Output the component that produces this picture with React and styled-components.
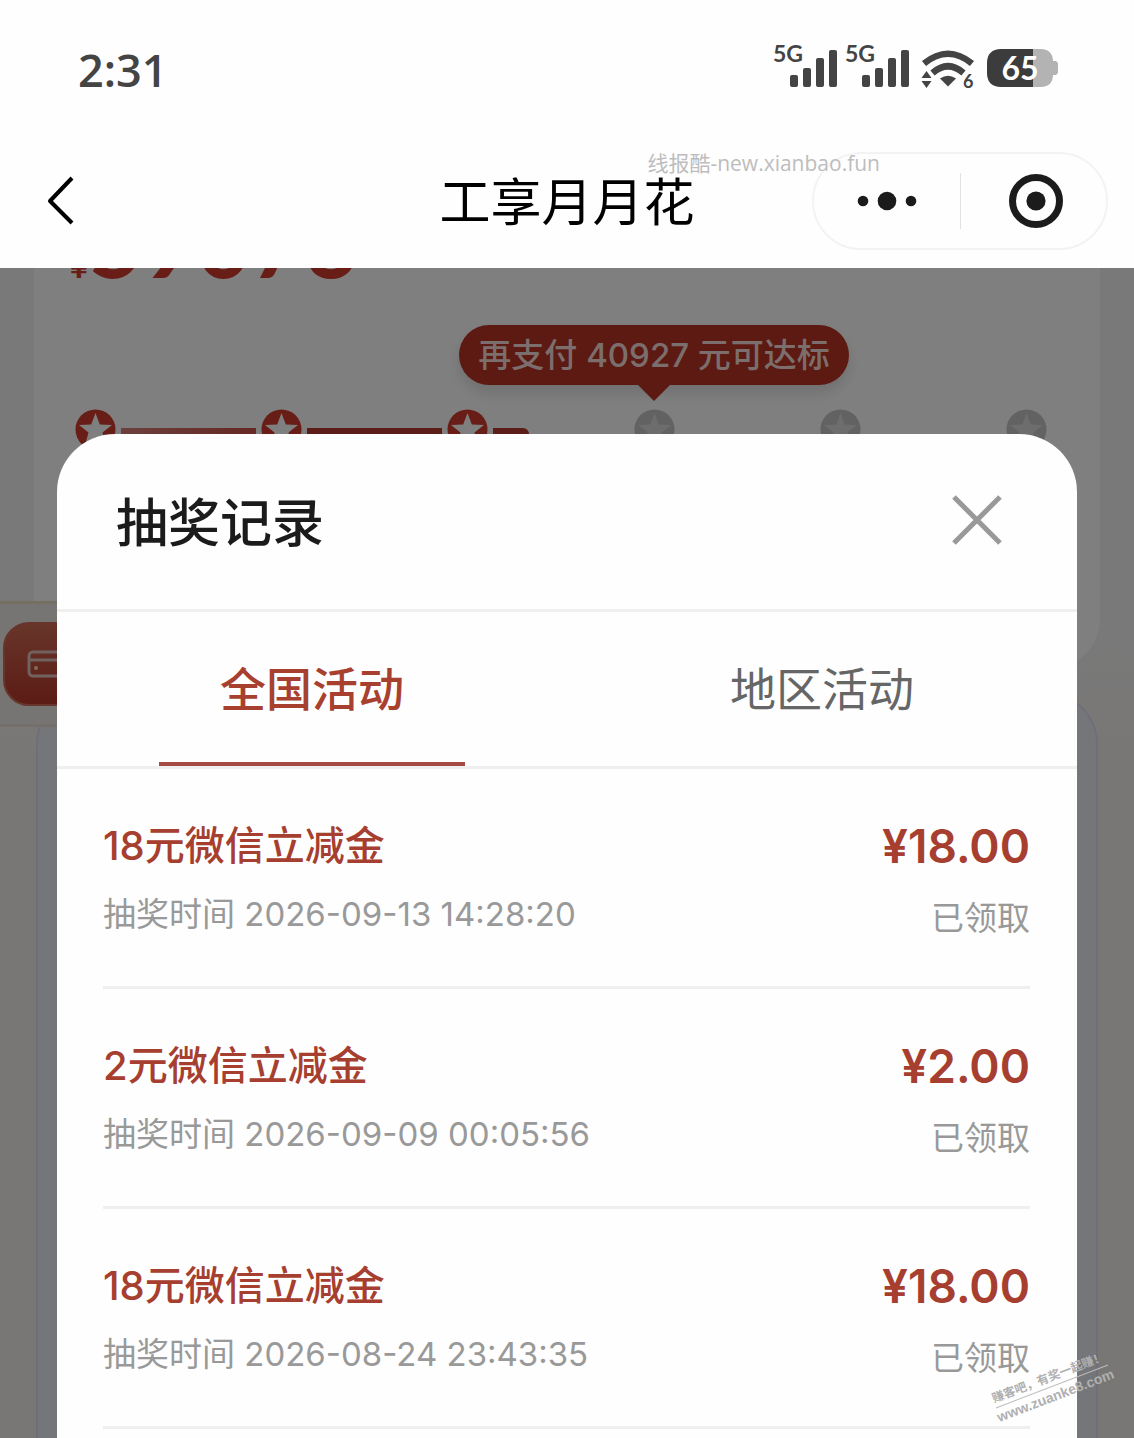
import React, { useState } from "react";
import styled, { createGlobalStyle } from "styled-components";

const records = [
  { id: 1, name: "18元微信立减金", time: "2026-09-13 14:28:20", amount: "18.00" },
  { id: 2, name: "2元微信立减金", time: "2026-09-09 00:05:56", amount: "2.00" },
  { id: 3, name: "18元微信立减金", time: "2026-08-24 23:43:35", amount: "18.00" },
];

const tabs = ["全国活动", "地区活动"];

// fill: how much of the bar after the star is done, in percent
const steps = [
  { id: 1, done: true, fill: 100 },
  { id: 2, done: true, fill: 100 },
  { id: 3, done: true, fill: 26 },
  { id: 4, done: false, fill: 0, tip: "再支付 40927 元可达标" },
  { id: 5, done: false, fill: 0 },
  { id: 6, done: false, fill: 0 },
];

const Signal = () => (
  <svg width="64" height="56" viewBox="0 -8 64 56" fill="#444">
    <text x="0" y="18" fontSize="23" fontWeight="700">
      5G
    </text>
    <rect x="17" y="31" width="8" height="12" rx="2" />
    <rect x="30" y="24" width="8" height="19" rx="2" />
    <rect x="43" y="14" width="8" height="29" rx="2" />
    <rect x="56" y="6" width="8" height="37" rx="2" />
  </svg>
);

const Wifi = () => (
  <svg width="54" height="56" viewBox="0 -8 54 56" fill="#444">
    <g fill="none" stroke="#444" strokeWidth="6.500">
      <path d="M3 19.500Q27 0 51 19.500" />
      <path d="M11.500 29Q27 15.500 42.500 29" />
    </g>
    <path d="M19 34.500Q27 29 35 34.500L27 42.500Z" />
    <path d="M0.500 34L5.500 27L10.500 34ZM0.500 37H10.500L5.500 44Z" />
    <text x="42" y="44" fontSize="18" fontWeight="700">
      6
    </text>
  </svg>
);

const Battery = () => (
  <svg width="71" height="56" viewBox="0 -13 71 56">
    <path
      fill="#b3b3b3"
      d="M46 0H54C62 0 66 5 66 12H68Q71 12 71 16V22Q71 26 68 26H66C66 33 62 38 54 38H46Z"
    />
    <path fill="#3c3c3c" d="M46 0H14C5 0 0 5 0 14V24C0 33 5 38 14 38H46Z" />
    <text
      x="33"
      y="31"
      fill="#fff"
      fontSize="32"
      fontWeight="700"
      textAnchor="middle"
    >
      65
    </text>
  </svg>
);

const Star = ({ done }) => (
  <svg width="41" height="41" viewBox="0 0 41 41">
    <circle cx="20.500" cy="20.500" r="20" fill={done ? "#d03c2c" : "#c4c4c4"} />
    <path
      fill={done ? "#fff" : "#dadada"}
      d="M20.500 4L24.800 15.500L37 16L27.500 23.500L30.700 35.300L20.500 28.500L10.300 35.300L13.500 23.500L4 16L16.200 15.500Z"
    />
  </svg>
);

const App = () => {
  const [active, setActive] = useState(0);

  return (
    <Screen>
      <GlobalStyle />
      <StatusBar>
        <Clock>2:31</Clock>
        <StatusIcons>
          <Signal />
          <Signal />
          <Wifi />
          <Battery />
        </StatusIcons>
      </StatusBar>
      <NavBar>
        <BackButton aria-label="返回">
          <svg width="28" height="50" viewBox="0 0 28 50">
            <path
              d="M26 2L4 25L26 47"
              fill="none"
              stroke="#000"
              strokeWidth="4"
              strokeLinejoin="round"
            />
          </svg>
        </BackButton>
        <NavTitle>工享月月花</NavTitle>
        <Capsule>
          <CapsuleButton aria-label="更多">
            <svg width="60" height="20" viewBox="0 0 60 20" fill="#1b1b1b">
              <circle cx="6" cy="10" r="5.300" />
              <circle cx="30" cy="10" r="9.300" />
              <circle cx="54" cy="10" r="5.300" />
            </svg>
          </CapsuleButton>
          <CapsuleButton aria-label="关闭小程序">
            <svg width="54" height="54" viewBox="0 0 54 54">
              <circle
                cx="27"
                cy="27"
                r="23.500"
                fill="none"
                stroke="#1b1b1b"
                strokeWidth="7"
              />
              <circle cx="27" cy="27" r="9.600" fill="#1b1b1b" />
            </svg>
          </CapsuleButton>
        </Capsule>
        <SiteMark>线报酷-new.xianbao.fun</SiteMark>
      </NavBar>

      <Stage>
        <Page>
          <ProgressCard>
            <Total>
              <small>¥</small>59073
            </Total>
            <Tracker>
              {steps.map((step, i) => (
                <React.Fragment key={step.id}>
                  <Step>
                    <Star done={step.done} />
                    {step.tip && <Tip>{step.tip}</Tip>}
                  </Step>
                  {i < steps.length - 1 && (
                    <Track>
                      <Fill
                        $faded={i === 0}
                        $end={step.fill < 100}
                        style={{ width: `${step.fill}%` }}
                      />
                    </Track>
                  )}
                </React.Fragment>
              ))}
            </Tracker>
          </ProgressCard>
          <NextCard />
          <Banner>
            <BannerIcon>
              <svg width="52" height="28" viewBox="0 0 52 28">
                <g fill="none" stroke="#e3c4be" strokeWidth="3">
                  <rect x="2" y="2" width="48" height="24" rx="4" />
                  <path d="M2 10H50" />
                </g>
                <circle cx="9" cy="18" r="2" fill="#ffd9b8" />
              </svg>
            </BannerIcon>
          </Banner>
        </Page>

        <Backdrop>
          <Modal role="dialog" aria-labelledby="record-title">
            <ModalHeader>
              <h2 id="record-title">抽奖记录</h2>
              <CloseButton aria-label="关闭">
                <svg width="50" height="50" viewBox="0 0 50 50">
                  <path
                    d="M2 2L48 48M48 2L2 48"
                    stroke="#999"
                    strokeWidth="5"
                  />
                </svg>
              </CloseButton>
            </ModalHeader>
            <Tabs role="tablist">
              {tabs.map((tab, i) => (
                <Tab
                  key={tab}
                  role="tab"
                  aria-selected={active === i}
                  $active={active === i}
                  onClick={() => setActive(i)}
                >
                  {tab}
                </Tab>
              ))}
            </Tabs>
            <RecordList>
              {records.map((record) => (
                <Record key={record.id}>
                  <Info>
                    <h3>{record.name}</h3>
                    <p>抽奖时间 {record.time}</p>
                  </Info>
                  <Prize>
                    <strong>¥{record.amount}</strong>
                    <span>已领取</span>
                  </Prize>
                </Record>
              ))}
            </RecordList>
          </Modal>
        </Backdrop>

        <ForumMark>
          <span>赚客吧，有奖一起赚！</span>
          <b>www.zuanke8.com</b>
        </ForumMark>
      </Stage>
    </Screen>
  );
};

const GlobalStyle = createGlobalStyle`
  * {
    box-sizing: border-box;
    margin: 0;
    padding: 0;
  }
  body {
    background: #fefefe;
    font-family: Inter, "Noto Sans CJK SC", sans-serif;
  }
  button {
    background: none;
    border: none;
    font: inherit;
    cursor: pointer;
  }
  svg {
    display: block;
    overflow: visible;
  }
`;

const Screen = styled.div`
  display: flex;
  flex-direction: column;
  min-height: 100vh;
`;

const StatusBar = styled.header`
  display: flex;
  align-items: center;
  justify-content: space-between;
  height: 134px;
  padding: 4px 76px 0 78px;
`;

const Clock = styled.span`
  font-family: "Open Sans", sans-serif;
  font-size: 45px;
  font-weight: 600;
  color: #444;
`;

const StatusIcons = styled.div`
  display: flex;
  align-items: center;
  gap: 8px;
  margin-bottom: 10px;
  font-family: Lato, sans-serif;
  & > :nth-child(n + 3) {
    margin-left: 4px;
  }
`;

const NavBar = styled.nav`
  position: relative;
  display: grid;
  grid-template-columns: 1fr auto 1fr;
  align-items: center;
  height: 134px;
  padding: 0 26px 0 46px;
`;

const BackButton = styled.button`
  justify-self: start;
`;

const NavTitle = styled.h1`
  padding-top: 4px;
  font-size: 51px;
  font-weight: 400;
  line-height: 60px;
  color: #000;
  margin-left: -20px;
`;

const Capsule = styled.div`
  justify-self: end;
  display: grid;
  grid-template-columns: 1fr 1fr;
  align-items: center;
  width: 296px;
  height: 98px;
  border: 2px solid #f3f3f3;
  border-radius: 49px;
`;

const CapsuleButton = styled.button`
  display: flex;
  align-items: center;
  justify-content: center;
  height: 56px;
  & + & {
    padding-left: 4px;
    border-left: 1px solid #e2e2e2;
  }
`;

const SiteMark = styled.span`
  position: absolute;
  top: 14px;
  right: 254px;
  font-family: "Open Sans", "Noto Sans CJK SC", sans-serif;
  font-size: 21px;
  line-height: 30px;
  color: #bdbdbd;
`;

const Stage = styled.main`
  position: relative;
  flex: 1;
  display: grid;
  overflow: hidden;
`;

const Page = styled.div`
  grid-area: 1 / 1;
  position: relative;
  display: flex;
  flex-direction: column;
  gap: 22px;
  padding: 0 34px;
  background: linear-gradient(#f3f3f3 0, #f3f3f3 360px, #f1eeea 520px);
`;

const ProgressCard = styled.section`
  height: 474px;
  margin-top: -72px;
  padding: 0 53px 0 41px;
  background: #fff;
  border-radius: 52px;
`;

// the page is scrolled so that only the foot of the amount shows
const Total = styled.div`
  height: 93px;
  font-family: Lato, sans-serif;
  font-size: 93px;
  font-weight: 700;
  line-height: 93px;
  color: #d03c2c;
  margin-left: -6px;
  small {
    font-size: 34px;
    line-height: 34px;
  }
`;

const Tracker = styled.div`
  display: flex;
  align-items: center;
  margin-top: 120px;
`;

const Step = styled.div`
  position: relative;
`;

const Track = styled.div`
  flex: 1;
  height: 4px;
  margin: 0 5px;
`;

const Fill = styled.div`
  height: 12px;
  border-radius: ${({ $end }) => ($end ? "0 6px 6px 0" : "0")};
  background: ${({ $faded }) =>
    $faded ? "linear-gradient(90deg, #d8807a, #cc5048)" : "#b83a30"};
`;

const Tip = styled.div`
  position: absolute;
  bottom: 65px;
  left: 50%;
  transform: translateX(-50%);
  width: 390px;
  font-size: 33px;
  font-weight: 500;
  line-height: 60px;
  text-align: center;
  white-space: nowrap;
  color: #f6dcd8;
  background: #b83424;
  border-radius: 30px;
  box-shadow: 0 8px 14px rgba(0, 0, 0, 0.12);
  &::after {
    content: "";
    position: absolute;
    top: 100%;
    left: 50%;
    margin-left: -16px;
    border: 16px solid transparent;
    border-top-color: #b83424;
    border-bottom: none;
  }
`;

const NextCard = styled.section`
  flex: 1;
  margin: 0 2px;
  background: #ebecf4;
  border: 2px solid #dcdff0;
  border-bottom: none;
  border-radius: 52px 52px 0 0;
`;

const Banner = styled.aside`
  position: absolute;
  top: 333px;
  left: 0;
  padding: 18px 3px;
  background: #efebe8;
  border-top: 3px solid #e9dfc4;
  border-bottom: 3px solid #e9dfd4;
`;

const BannerIcon = styled.div`
  display: flex;
  align-items: center;
  width: 100px;
  height: 84px;
  padding-left: 22px;
  background: linear-gradient(#cf6a54, #b8382c);
  border: 2px solid #cf6a58;
  border-radius: 26px;
`;

const Backdrop = styled.div`
  grid-area: 1 / 1;
  position: relative;
  display: flex;
  padding: 166px 57px 0;
  background: rgba(0, 0, 0, 0.5);
`;

const Modal = styled.section`
  flex: 1;
  background: #fefefe;
  border-radius: 58px 58px 0 0;
`;

const ModalHeader = styled.header`
  display: flex;
  align-items: center;
  justify-content: space-between;
  height: 178px;
  padding: 0 75px 0 59px;
  border-bottom: 3px solid #efefef;
  h2 {
    padding-top: 4px;
    font-size: 52px;
    font-weight: 500;
    line-height: 60px;
    color: #1b1b1b;
  }
`;

const CloseButton = styled.button`
  padding-bottom: 4px;
`;

const Tabs = styled.div`
  display: flex;
  border-bottom: 3px solid #efefef;
`;

const Tab = styled.button`
  flex: 1;
  display: flex;
  flex-direction: column;
  align-items: center;
  padding-top: 47px;
  font-size: 46px;
  font-weight: ${({ $active }) => ($active ? 500 : 400)};
  line-height: 60px;
  color: ${({ $active }) => ($active ? "#a8402f" : "#666")};
  &::after {
    content: "";
    width: 60%;
    height: 4px;
    margin-top: 43px;
    background: ${({ $active }) => ($active ? "#a34a42" : "transparent")};
  }
`;

const RecordList = styled.ul`
  list-style: none;
  padding: 0 47px 12px 46px;
`;

const Record = styled.li`
  display: flex;
  justify-content: space-between;
  height: 220px;
  padding-top: 49px;
  border-bottom: 3px solid #efefef;
`;

const Info = styled.div`
  h3 {
    font-size: 40px;
    font-weight: 500;
    line-height: 56px;
    color: #a63f2f;
  }
  p {
    margin-top: 12px;
    font-size: 33px;
    line-height: 56px;
    color: #999;
  }
`;

const Prize = styled.div`
  display: flex;
  flex-direction: column;
  align-items: flex-end;
  strong {
    font-size: 46px;
    font-weight: 600;
    line-height: 56px;
    color: #a63f2f;
  }
  span {
    margin-top: 16px;
    font-size: 33px;
    line-height: 56px;
    color: #999;
  }
`;

const ForumMark = styled.div`
  position: absolute;
  right: 20px;
  bottom: 36px;
  display: flex;
  flex-direction: column;
  align-items: center;
  font-family: "Liberation Sans", "Noto Sans CJK SC", sans-serif;
  font-size: 14px;
  line-height: 18px;
  color: #b0b0b0;
  transform: rotate(-21deg);
  span {
    font-size: 12px;
    font-weight: 700;
    border-bottom: 1px solid #bbb;
  }
`;

export default App;
